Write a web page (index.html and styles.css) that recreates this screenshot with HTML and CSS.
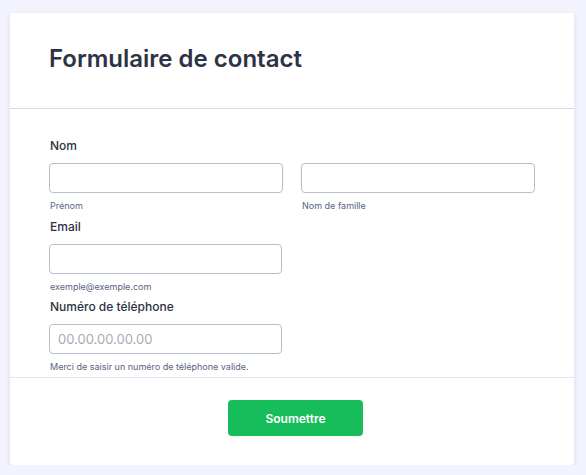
FILE: index.html
```html
<!DOCTYPE html>
<html lang="fr">
<head>
<meta charset="utf-8">
<title>Formulaire de contact</title>
<link rel="stylesheet" href="styles.css">
</head>
<body>
<main class="card">
  <header class="card-header">
    <h1 class="title">Formulaire de contact</h1>
  </header>
  <section class="card-body">
    <div class="field">
      <label class="label">Nom</label>
      <div class="name-row">
        <div class="sub">
          <input class="input" type="text">
          <span class="hint">Prénom</span>
        </div>
        <div class="sub">
          <input class="input" type="text">
          <span class="hint">Nom de famille</span>
        </div>
      </div>
    </div>
    <div class="field">
      <label class="label">Email</label>
      <input class="input input-single" type="email">
      <span class="hint">exemple@exemple.com</span>
    </div>
    <div class="field">
      <label class="label">Numéro de téléphone</label>
      <input class="input input-single" type="tel" placeholder="00.00.00.00.00">
      <span class="hint">Merci de saisir un numéro de téléphone valide.</span>
    </div>
  </section>
  <footer class="card-footer">
    <button class="submit" type="button">Soumettre</button>
  </footer>
</main>
</body>
</html>
```

FILE: styles.css
```css
* { box-sizing: border-box; }
html, body { margin: 0; padding: 0; }
body {
  background: #f3f3fe;
  font-family: Inter, "Noto Sans", sans-serif;
  color: #2c3345;
  padding-top: 13px;
}
.card {
  width: 564px;
  margin-left: 10px;
  background: #ffffff;
  border-radius: 3px;
  box-shadow: 0 2px 4px rgba(84, 95, 111, 0.16);
}
.card-header {
  padding: 31px 39px 34px;
  border-bottom: 1px solid #dadae6;
}
.title {
  margin: 0;
  font-size: 24px;
  line-height: 30px;
  font-weight: 600;
  color: #2c3345;
}
.card-body {
  padding: 30px 39px 4px;
  display: flex;
  flex-direction: column;
  gap: 7px;
}
.field {
  display: flex;
  flex-direction: column;
}
.label {
  font-size: 12px;
  line-height: 14px;
  font-weight: 450;
  color: #2c3345;
  padding-left: 1px;
  margin-bottom: 10px;
}
.name-row {
  display: grid;
  grid-template-columns: 234px 234px;
  gap: 18px;
}
.sub { display: flex; flex-direction: column; }
.input {
  display: block;
  width: 100%;
  height: 30px;
  border: 1px solid #b8bdc9;
  border-radius: 4px;
  background: #fff;
  padding: 0 8px;
  font-family: inherit;
  font-size: 13px;
  color: #2c3345;
  margin: 0;
}
.input-single { width: 233px; }
.input::placeholder { color: #a7abb6; }
.hint {
  display: block;
  margin-top: 7px;
  padding-left: 1px;
  font-size: 9px;
  line-height: 12px;
  color: #57647e;
}
.field + .field { padding-top: 1px; }
.field:last-child { padding-top: 0; }
.card-footer {
  border-top: 1px solid #e3e3ee;
  padding: 22px 0 29px;
  display: flex;
  justify-content: center;
}
.submit {
  width: 135px;
  height: 36px;
  margin-left: 7px;
  border: none;
  border-radius: 4px;
  background: #18bd5b;
  color: #fff;
  font-family: inherit;
  font-size: 12px;
  font-weight: 600;
  cursor: pointer;
}
```
